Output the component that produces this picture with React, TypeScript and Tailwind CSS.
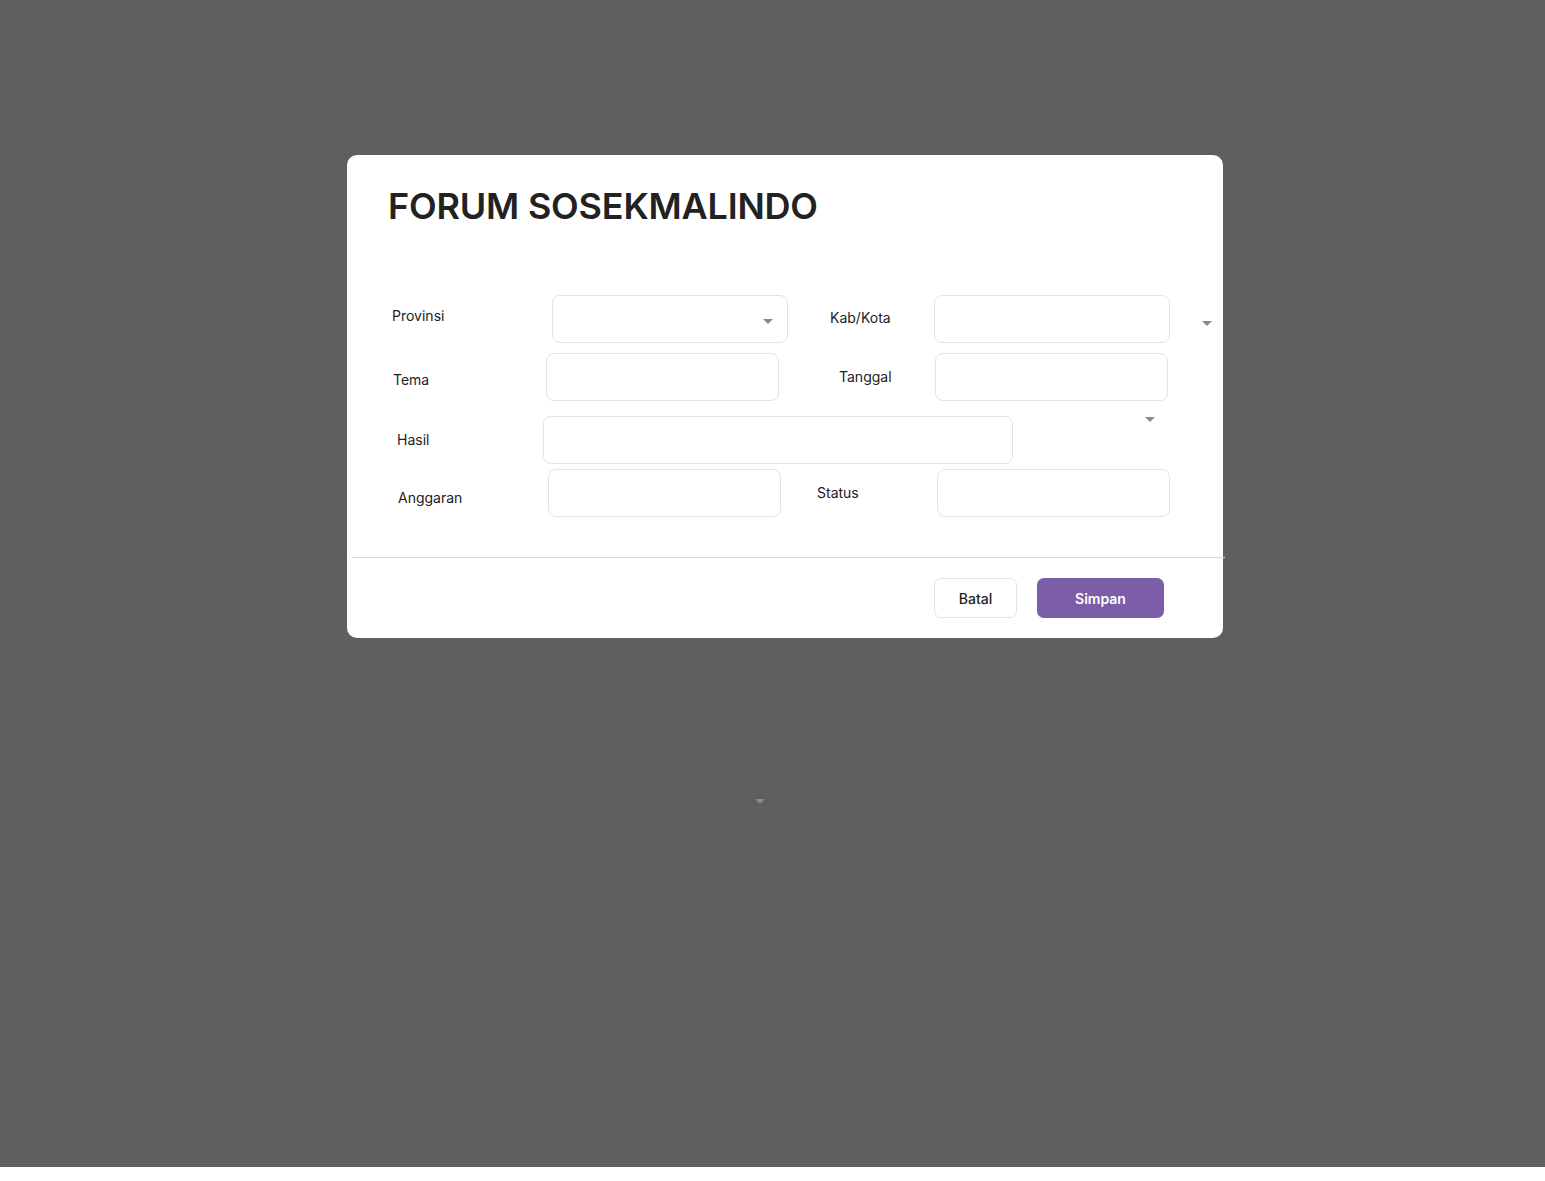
import React from "react";

function Arrow({ className = "" }: { className?: string }) {
  return (
    <div
      className={
        "w-0 h-0 border-l-[5px] border-r-[5px] border-t-[5px] border-l-transparent border-r-transparent border-t-[#8a8a8a] " +
        className
      }
    />
  );
}

const box = "h-[48px] rounded-[8px] border border-[#e3e3e3] bg-white shrink-0";
const label = "text-[14px] leading-[20px] text-[#222] shrink-0";

export default function App() {
  return (
    <div
      className="relative min-h-[1167px] bg-[#5f5f5f] pt-[155px] pl-[347px]"
      style={{ fontFamily: "Inter, 'Noto Sans', sans-serif" }}
    >
      <div className="relative w-[876px] rounded-[10px] bg-white pt-[29px] pb-[20px]">
        <h1 className="pl-[41px] text-[36px] leading-[44px] font-semibold text-[#222] tracking-[-0.2px]">
          FORUM SOSEKMALINDO
        </h1>

        <div className="mt-[67px]">
          {/* Row 1 */}
          <div className="flex items-start pl-[45px] h-[48px]">
            <div className={label + " w-[160px] mt-[11px]"}>Provinsi</div>
            <div className={box + " w-[236px] flex items-center justify-end pr-[14px]"}>
              <Arrow className="mt-[4px]" />
            </div>
            <div className={label + " w-[104px] ml-[42px] mt-[13px]"}>Kab/Kota</div>
            <div className={box + " w-[236px]"} />
            <Arrow className="ml-[32px] mt-[26px]" />
          </div>

          {/* Row 2 */}
          <div className="flex items-start pl-[46px] h-[48px] mt-[10px]">
            <div className={label + " w-[153px] mt-[17px]"}>Tema</div>
            <div className={box + " w-[233px]"} />
            <div className={label + " w-[96px] ml-[60px] mt-[14px]"}>Tanggal</div>
            <div className={box + " w-[233px]"} />
          </div>

          {/* Row 3 */}
          <div className="flex items-start pl-[50px] h-[48px] mt-[15px]">
            <div className={label + " w-[146px] mt-[14px]"}>Hasil</div>
            <div className={box + " w-[470px]"} />
            <Arrow className="ml-[132px] mt-[1px]" />
          </div>

          {/* Row 4 */}
          <div className="flex items-start pl-[51px] h-[48px] mt-[5px]">
            <div className={label + " w-[150px] mt-[19px]"}>Anggaran</div>
            <div className={box + " w-[233px]"} />
            <div className={label + " w-[120px] ml-[36px] mt-[14px]"}>Status</div>
            <div className={box + " w-[233px]"} />
          </div>
        </div>

        <div className="ml-[4px] mt-[40px] h-px w-[874px] bg-[#d9d9d9]" />

        <div className="mt-[20px] flex pl-[587px] gap-[20px]">
          <button className="h-[40px] w-[83px] rounded-[7px] border border-[#e3e3e3] bg-white text-[14px] font-medium text-[#222]">
            Batal
          </button>
          <button className="h-[40px] w-[127px] rounded-[7px] bg-[#7b5ea7] text-[14px] font-semibold text-white">
            Simpan
          </button>
        </div>
      </div>

      <Arrow className="absolute left-[755px] top-[799px] border-t-[#8a8a8a]" />
    </div>
  );
}
